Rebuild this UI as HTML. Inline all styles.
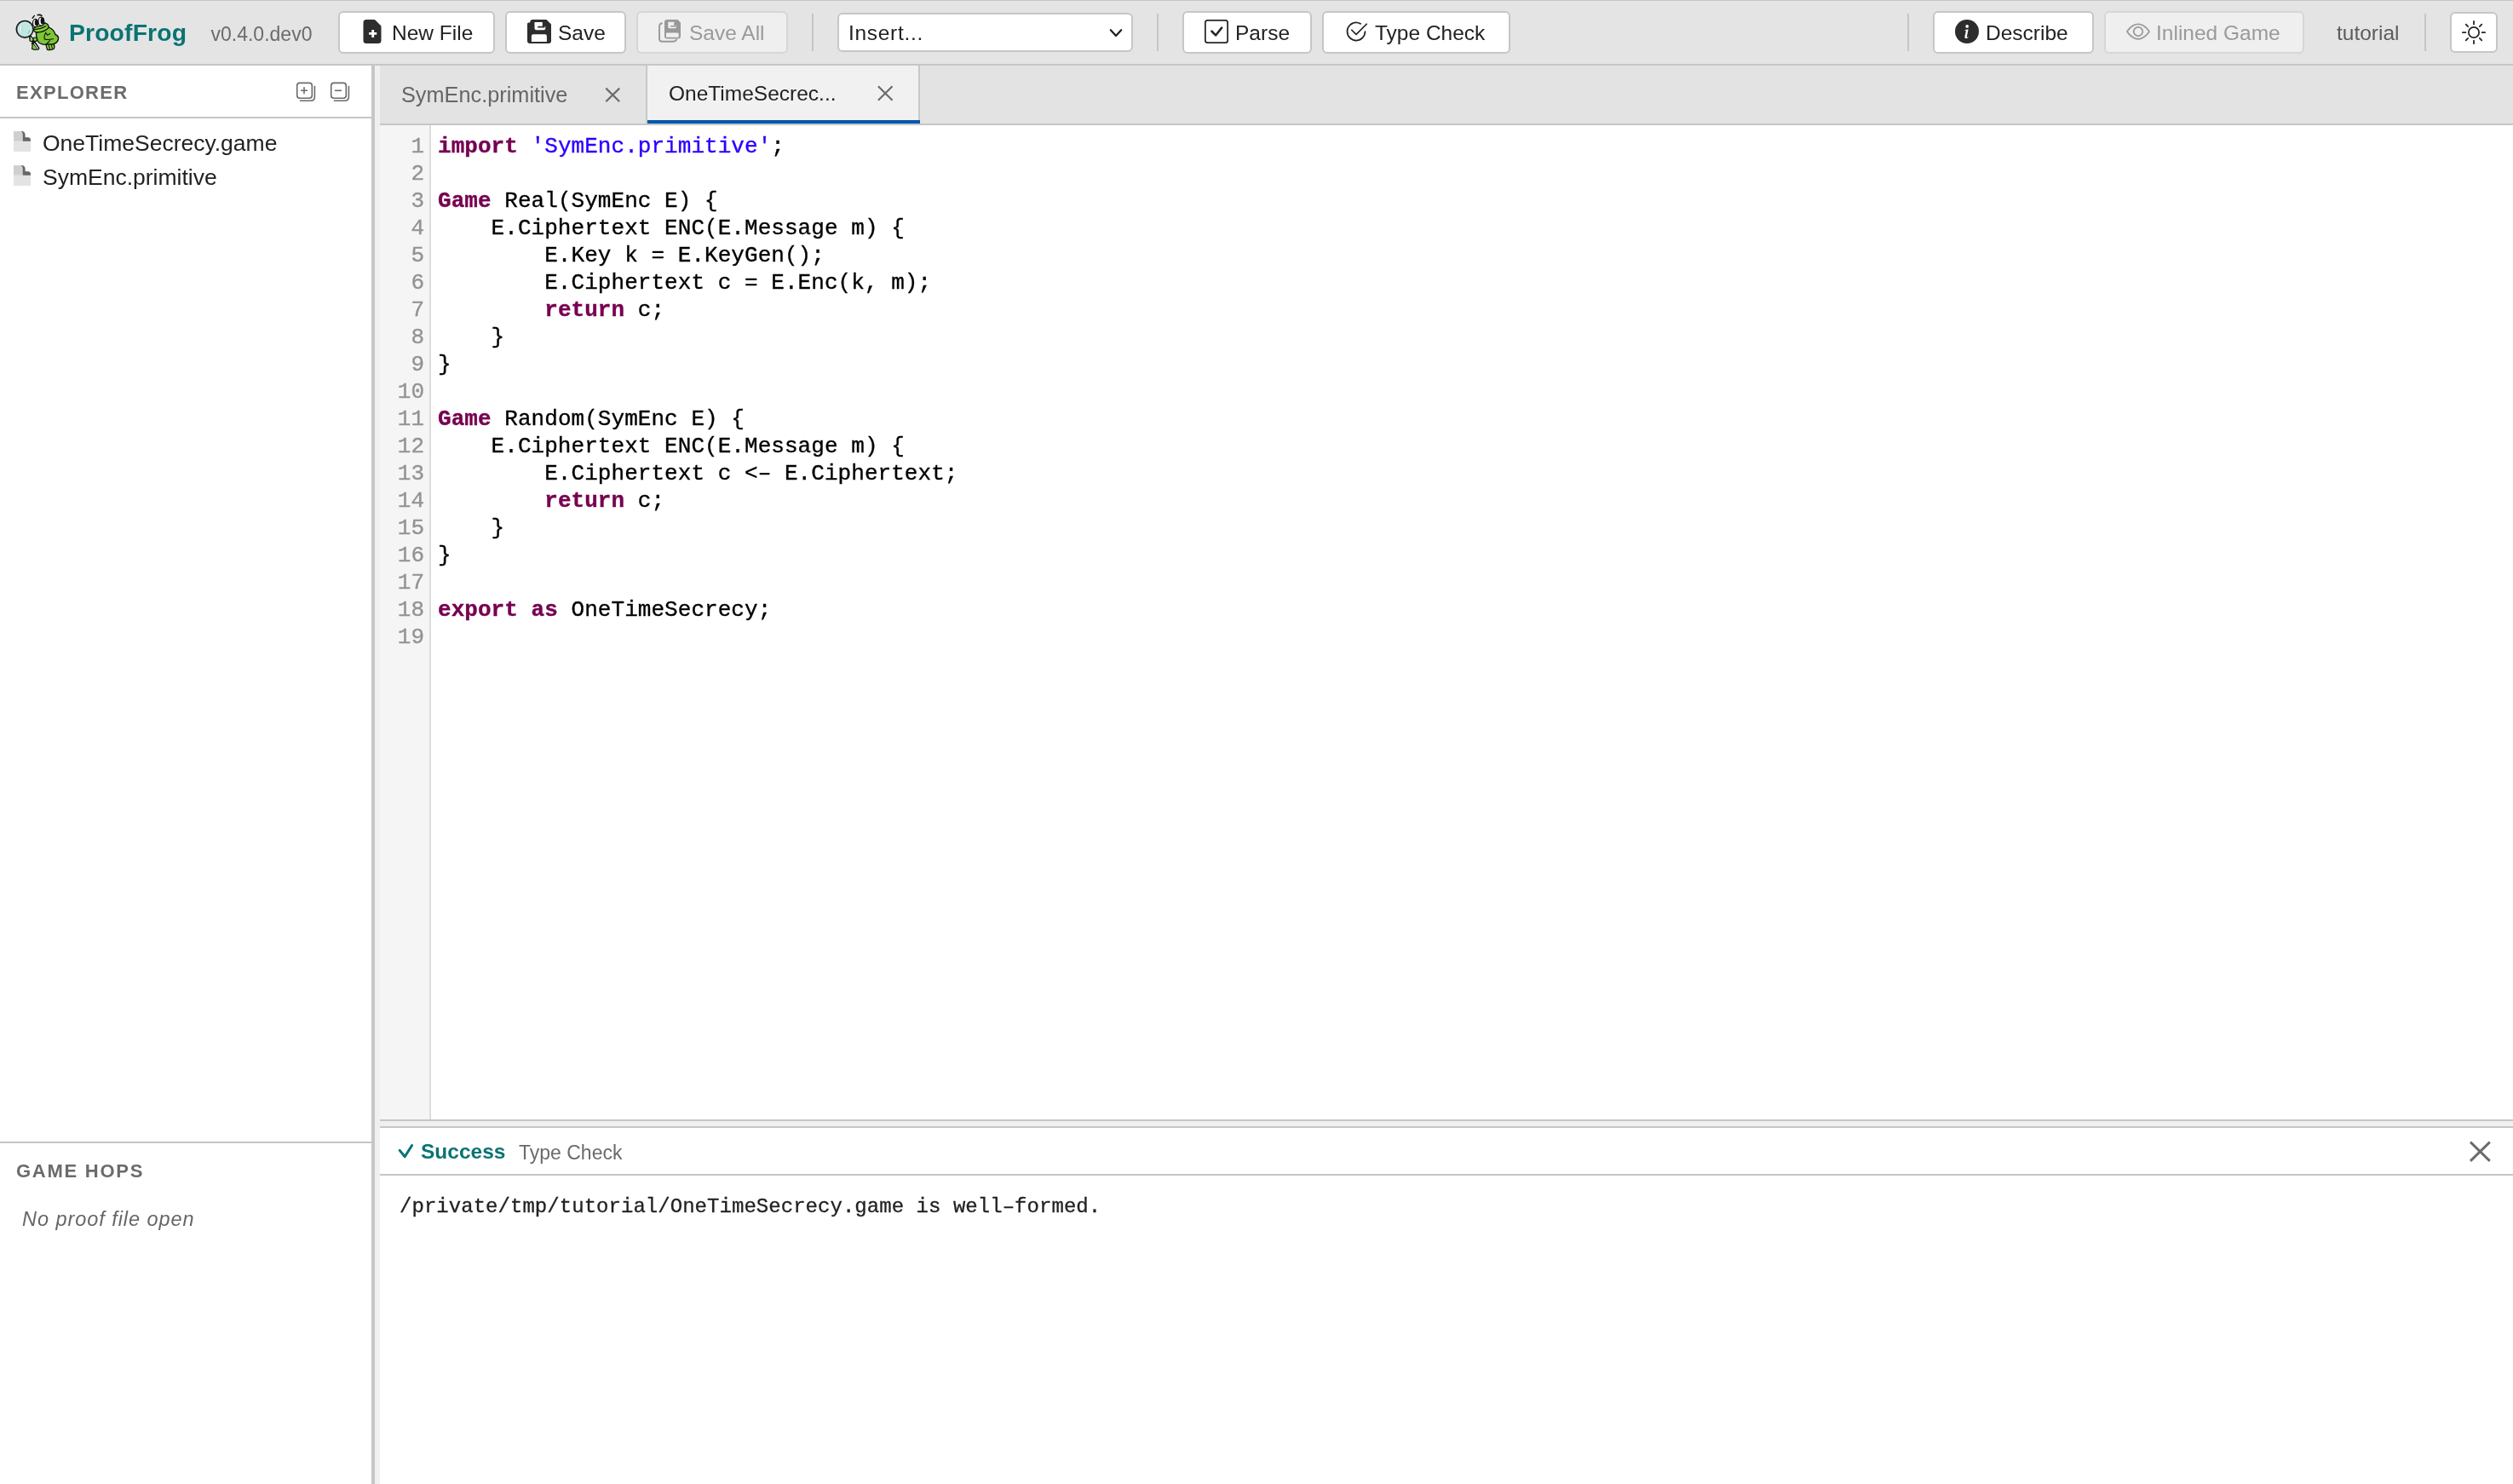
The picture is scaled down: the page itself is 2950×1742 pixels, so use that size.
<!DOCTYPE html>
<html><head><meta charset="utf-8">
<style>
*{box-sizing:border-box;margin:0;padding:0}
html,body{width:2950px;height:1742px;overflow:hidden;background:#fff;}
body{will-change:transform;font-family:"Liberation Sans",sans-serif;color:#222}
.a{position:absolute}
.t{position:absolute;white-space:pre;line-height:1}
#toolbar{left:0;top:0;width:2950px;height:77px;background:#e4e4e4;border-top:1px solid #c4c4c4;border-bottom:2px solid #c6c6c6}
.btn{position:absolute;top:13px;height:50px;background:#fff;border:2px solid #c6c6c6;border-radius:6px}
.btn.dis{background:#efefef;border-color:#d6d6d6}
.sep{position:absolute;top:16px;width:2px;height:44px;background:#c6c6c6}
.bt{position:absolute;white-space:pre;line-height:1;font-size:24.5px;color:#222}
.dis .bt{color:#999}
k{color:#770050;font-weight:700}s{color:#2a00ff;text-decoration:none}
</style></head>
<body>
<!-- TOOLBAR -->
<div id="toolbar" class="a"></div>
<svg class="a" style="left:0;top:0" width="80" height="70" viewBox="0 0 80 70">
<g stroke="#111" stroke-linejoin="round" stroke-linecap="round">
<path d="M35.5,43.3 L44.7,56.8" stroke-width="3.4"/>
<path d="M57.3,32.1 C61,33.5 64,37 65,40.5 C67.5,41.5 69,44 68.3,46.5 C67.5,49.5 65,51 63,51.5 L62,52.5 C60,52.8 57,52.5 54.5,52.3 C50,52.5 46,51 44.5,48.5 C43,45.5 42.5,41.5 42.3,38.5 C46,37.5 52,35.5 57.3,32.1 Z" fill="#7dc735" stroke-width="1.4"/>
<path d="M54,52 L63.2,51.8 C64,54 64,56.5 63,57.5 C60,58.8 57,58.8 55.5,58.2 C54.8,56 54.3,54 54,52 Z" fill="#84d236" stroke-width="1.3"/>
<path d="M57.3,53 L58.6,58.3 M60.3,52.8 L61.6,57.6" fill="none" stroke-width="1"/>
<path d="M38.9,34.3 C40,32 43,31 46,30.8 C49,30.5 51.5,29 52.5,27 C55,27.5 57,29.5 57.3,32.1 C55,35 50,37.5 44.7,37.9 C41.5,38 39.5,36.5 38.9,34.3 Z" fill="#84d236" stroke-width="1.3"/>
<path d="M39.3,34.7 C42,34.5 45,34 47.6,33.4 C50,32.7 52.5,31.5 54,30.5" fill="none" stroke-width="1.1"/>
<path d="M53.7,38.3 C52.3,40.5 51.6,43 52.1,45.7 C54,46.8 58,46.6 62.5,45.7 M53.7,38.3 L55.6,41.2 L58.8,39.6" fill="none" stroke-width="1.1"/>
<path d="M54.7,51.5 L58.6,47.6" fill="none" stroke-width="1.1"/>
<ellipse cx="41.6" cy="27" rx="3.1" ry="4.55" fill="#fff" stroke-width="1.2"/>
<ellipse cx="48.4" cy="25.2" rx="3.4" ry="5" fill="#fff" stroke-width="1.2"/>
<ellipse cx="42.7" cy="26.4" rx="1.9" ry="3.7" fill="#111" stroke="none"/>
<ellipse cx="49.7" cy="24.6" rx="2.1" ry="4" fill="#111" stroke="none"/>
<path d="M38.1,21.2 L40.4,18.4" fill="none" stroke-width="1.4"/>
<path d="M44.3,17.6 C46,17.2 47.8,17.5 48.9,18.4" fill="none" stroke-width="1.6"/>
<path d="M37.4,50.2 C39.5,51.5 42,53.5 43.8,55.3 L44.2,58 C42,58.6 39.5,58.2 37.5,57.2 C38.3,55 38.2,52.5 37.4,50.2 Z" fill="#84d236" stroke-width="1.2"/>
<circle cx="36.9" cy="46.4" r="2.1" fill="#84d236" stroke-width="1.1"/>
<circle cx="41.2" cy="46.3" r="2.3" fill="#84d236" stroke-width="1.1"/>
<path d="M40.3,51.2 L44.5,56.8" stroke="#111" stroke-width="2.6"/>
<path d="M40.3,51.2 L44.5,56.8" stroke="#d6f0f0" stroke-width="1.1"/>
<path d="M36,43.8 L37.6,46" stroke="#d6f0f0" stroke-width="1"/>
</g>
<circle cx="29.2" cy="34.3" r="10.6" fill="#111"/>
<circle cx="29.2" cy="34.3" r="9.3" fill="#6f8f8d"/>
<circle cx="29.2" cy="34.3" r="8.5" fill="#dff5f2"/>
<circle cx="29.2" cy="34.3" r="7.8" fill="#bfe8e2"/>
<path d="M25.3,30.3 C24.2,32.5 24.2,35.5 25.2,37.8" fill="none" stroke="#fff" stroke-width="1.1"/>
<path d="M26.2,30.2 C25.2,32.5 25.2,35.5 26,37.6" fill="none" stroke="#8fa9a7" stroke-width="0.5"/>
<path d="M34.8,35.5 C34.4,37 33.8,38.2 33,39.2" fill="none" stroke="#7a9896" stroke-width="0.8"/>
</svg>
<div class="t" style="left:81px;top:24px;font-size:28.3px;letter-spacing:0.15px;font-weight:700;color:#0a7373">ProofFrog</div>
<div class="t" style="left:247.5px;top:29px;font-size:23px;color:#6b6b6b">v0.4.0.dev0</div>

<div class="btn" style="left:397px;width:184px"></div>
<div class="btn" style="left:593px;width:142px"></div>
<div class="btn dis" style="left:747px;width:178px"></div>
<div class="sep" style="left:953px"></div>
<div class="btn" style="left:983px;top:15px;width:347px;height:46px"></div>
<div class="sep" style="left:1358px"></div>
<div class="btn" style="left:1388px;width:152px"></div>
<div class="btn" style="left:1552px;width:221px"></div>
<div class="sep" style="left:2239px"></div>
<div class="btn" style="left:2269px;width:189px"></div>
<div class="btn dis" style="left:2470px;width:235px"></div>
<div class="sep" style="left:2846px"></div>
<div class="btn" style="left:2876px;top:14px;width:56px;height:48px"></div>

<!-- SIDEBAR -->
<div class="a" style="left:436px;top:77px;width:4px;height:1665px;background:#c6c6c6"></div>
<div class="a" style="left:440px;top:77px;width:6px;height:1665px;background:#f0f0f0"></div>
<div class="a" style="left:0;top:137px;width:436px;height:2px;background:#c6c6c6"></div>
<div class="a" style="left:0;top:1340px;width:436px;height:2px;background:#c6c6c6"></div>

<!-- TABS -->
<div class="a" style="left:446px;top:77px;width:2504px;height:70px;background:#e3e3e3;border-bottom:2px solid #c6c6c6"></div>
<div class="a" style="left:758px;top:77px;width:322px;height:68px;background:#f1f1f1;border-left:2px solid #c8c8c8;border-right:2px solid #c8c8c8"></div>
<div class="a" style="left:760px;top:141px;width:320px;height:4px;background:#0057ae"></div>

<!-- EDITOR -->
<div class="a" style="left:446px;top:147px;width:58px;height:1167px;background:#f5f5f5"></div>
<div class="a" style="left:504px;top:147px;width:2px;height:1167px;background:#dcdcdc"></div>
<div class="a" style="left:446px;top:1314px;width:2504px;height:2px;background:#c6c6c6"></div>
<div class="a" style="left:446px;top:1316px;width:2504px;height:6px;background:#f0f0f0"></div>
<div class="a" style="left:446px;top:1322px;width:2504px;height:2px;background:#c6c6c6"></div>
<div class="a" style="left:446px;top:1378px;width:2504px;height:2px;background:#c6c6c6"></div>


<!-- toolbar text -->
<div class="bt" style="left:460px;top:27px">New File</div>
<div class="bt" style="left:655px;top:27px">Save</div>
<div class="bt" style="left:809px;top:27px;color:#9a9a9a">Save All</div>
<div class="bt" style="left:996px;top:27px;letter-spacing:0.7px">Insert...</div>
<div class="bt" style="left:1450px;top:27px">Parse</div>
<div class="bt" style="left:1614px;top:27px">Type Check</div>
<div class="bt" style="left:2331px;top:27px">Describe</div>
<div class="bt" style="left:2531px;top:27px;color:#9a9a9a">Inlined Game</div>
<div class="bt" style="left:2743px;top:27px;color:#5c5c5c">tutorial</div>

<!-- sidebar text -->
<div class="t" style="left:19px;top:98px;font-size:22px;font-weight:700;letter-spacing:1.3px;color:#6b6b6b">EXPLORER</div>
<div class="t" style="left:50px;top:155px;font-size:26.5px;color:#222">OneTimeSecrecy.game</div>
<div class="t" style="left:50px;top:195px;font-size:26.5px;color:#222">SymEnc.primitive</div>
<div class="t" style="left:19px;top:1364px;font-size:22px;font-weight:700;letter-spacing:1.75px;color:#6b6b6b">GAME HOPS</div>
<div class="t" style="left:26px;top:1420px;font-size:23.5px;letter-spacing:0.95px;font-style:italic;color:#666">No proof file open</div>

<!-- tabs text -->
<div class="t" style="left:471px;top:99px;font-size:25.3px;color:#666">SymEnc.primitive</div>
<div class="t" style="left:785px;top:98px;font-size:24.5px;color:#222">OneTimeSecrec...</div>

<!-- panel -->
<div class="t" style="left:494px;top:1340px;font-size:24.5px;font-weight:700;color:#0a7373">Success</div>
<div class="t" style="left:609px;top:1342px;font-size:23px;color:#6b6b6b">Type Check</div>
<div class="t" style="left:469px;top:1405px;font-family:'Liberation Mono',monospace;font-size:24px;letter-spacing:0.04px;color:#222;-webkit-text-stroke:0.3px #222">/private/tmp/tutorial/OneTimeSecrecy.game is well–formed.</div>
<div class="a" style="left:448px;top:156px;width:50px;font-family:'Liberation Mono',monospace;font-size:26px;line-height:32px;color:#939393;text-align:right;white-space:pre;-webkit-text-stroke:0.35px #939393">1
2
3
4
5
6
7
8
9
10
11
12
13
14
15
16
17
18
19</div>
<div class="a" id="code" style="left:514px;top:156px;letter-spacing:0.05px;font-family:'Liberation Mono',monospace;font-size:26px;line-height:32px;color:#000;white-space:pre;-webkit-text-stroke:0.35px"><k>import</k> <s>'SymEnc.primitive'</s>;

<k>Game</k> Real(SymEnc E) {
    E.Ciphertext ENC(E.Message m) {
        E.Key k = E.KeyGen();
        E.Ciphertext c = E.Enc(k, m);
        <k>return</k> c;
    }
}

<k>Game</k> Random(SymEnc E) {
    E.Ciphertext ENC(E.Message m) {
        E.Ciphertext c &lt;– E.Ciphertext;
        <k>return</k> c;
    }
}

<k>export</k> <k>as</k> OneTimeSecrecy;
</div>

<!-- ICONS -->
<svg class="a" style="left:423px;top:23px" width="28" height="28" viewBox="0 0 16 16"><path fill="#2d2d2d" d="M9.293 0H4a2 2 0 0 0-2 2v12a2 2 0 0 0 2 2h8a2 2 0 0 0 2-2V4.707A1 1 0 0 0 13.707 4L10 .293A1 1 0 0 0 9.293 0z"/><path stroke="#fff" stroke-width="1.6" d="M8.4 6.8v5.2M5.8 9.4h5.2"/></svg>
<svg class="a" style="left:619px;top:23px" width="28" height="28" viewBox="0 0 28 28"><path fill="#2d2d2d" d="M0,5 Q0,3.4 1.6,3.4 H3.2 Q3.4,0 6.2,0 H22.5 L28,5.5 V25 Q28,28 25,28 H3 Q0,28 0,25 Z"/><path fill="#fff" d="M4.9,26.1 V19.2 Q4.9,17.2 6.9,17.2 H20.9 Q22.9,17.2 22.9,19.2 V26.1 Z M8.5,3.1 H21.3 V10.2 Q21.3,12.2 19.3,12.2 H10.5 Q8.5,12.2 8.5,10.2 Z"/><path fill="#2d2d2d" d="M17.8,2 H22 V8.1 H17.8 Z M12.9,7.8 H20.5 V9.6 H12.9 Q12.1,9.6 12.1,8.7 Q12.1,7.8 12.9,7.8 Z"/></svg>
<svg class="a" style="left:772px;top:23px" width="28" height="28" viewBox="0 0 28 28"><path fill="none" stroke="#999" stroke-width="1.9" d="M5.8,4.3 Q2,4.4 2,8.5 V22.5 Q2,25.8 5.3,25.8 H18 Q21.5,25.8 22.4,23"/><path fill="#999" d="M8,3 Q8,0 11,0 H23.5 L27,3.5 V19.6 Q27,22.6 24,22.6 H11 Q8,22.6 8,19.6 Z"/><path fill="#efefef" d="M9.9,20.8 V17 Q9.9,15.6 11.3,15.6 H23.3 Q24.7,15.6 24.7,17 V20.8 Z M12.3,2.8 H21.7 V8.8 Q21.7,10.3 20.2,10.3 H13.8 Q12.3,10.3 12.3,8.8 Z"/><path fill="#999" d="M19.3,1.5 H22.5 V7.2 H19.3 Z M15.5,7 H21 V8.5 H15.5 Q14.8,8.5 14.8,7.75 Q14.8,7 15.5,7 Z"/></svg>
<svg class="a" style="left:1300px;top:31px" width="20" height="14" viewBox="0 0 20 14"><path fill="none" stroke="#222" stroke-width="2.3" stroke-linecap="round" stroke-linejoin="round" d="M3.8,4.3 L10,11 L16.2,4.3"/></svg>
<svg class="a" style="left:1414px;top:23px" width="28" height="28" viewBox="0 0 16 16"><path fill="#262626" d="M14 1a1 1 0 0 1 1 1v12a1 1 0 0 1-1 1H2a1 1 0 0 1-1-1V2a1 1 0 0 1 1-1zM2 0a2 2 0 0 0-2 2v12a2 2 0 0 0 2 2h12a2 2 0 0 0 2-2V2a2 2 0 0 0-2-2z"/><path fill="#262626" d="M10.97 4.97a.75.75 0 0 1 1.071 1.05l-3.992 4.99a.75.75 0 0 1-1.08.02L4.324 8.384a.75.75 0 1 1 1.06-1.06l2.094 2.093 3.473-4.425z"/></svg>
<svg class="a" style="left:1578px;top:23px" width="28" height="28" viewBox="0 0 16 16"><path fill="#222" d="M2.5 8a5.5 5.5 0 0 1 8.25-4.764.5.5 0 0 0 .5-.866A6.5 6.5 0 1 0 14.5 8a.5.5 0 0 0-1 0 5.5 5.5 0 1 1-11 0"/><path fill="#222" d="M15.354 3.354a.5.5 0 0 0-.708-.708L8 9.293 5.354 6.646a.5.5 0 1 0-.708.708l3 3a.5.5 0 0 0 .708 0z"/></svg>
<svg class="a" style="left:2295px;top:23px" width="28" height="28" viewBox="0 0 16 16"><circle cx="8" cy="8" r="8" fill="#2d2d2d"/><path fill="#fff" d="M8.93 6.588l-2.29.287-.082.38.45.083c.294.07.352.176.288.469l-.738 3.468c-.194.897.105 1.319.808 1.319.545 0 1.178-.252 1.465-.598l.088-.416c-.2.176-.492.246-.686.246-.275 0-.375-.193-.304-.533z"/><circle cx="8.1" cy="4.5" r="1.05" fill="#fff"/></svg>
<svg class="a" style="left:2496px;top:23px" width="28" height="28" viewBox="0 0 16 16"><path fill="#999" d="M16 8s-3-5.5-8-5.5S0 8 0 8s3 5.5 8 5.5S16 8 16 8M1.173 8a13 13 0 0 1 1.66-2.043C4.12 4.668 5.88 3.5 8 3.5s3.879 1.168 5.168 2.457A13 13 0 0 1 14.828 8q-.086.13-.195.288c-.335.48-.83 1.12-1.465 1.755C11.879 11.332 10.119 12.5 8 12.5s-3.879-1.168-5.168-2.457A13 13 0 0 1 1.172 8z"/><path fill="#999" d="M8 5.5a2.5 2.5 0 1 0 0 5 2.5 2.5 0 0 0 0-5M4.5 8a3.5 3.5 0 1 1 7 0 3.5 3.5 0 0 1-7 0"/></svg>
<svg class="a" style="left:2890px;top:24px" width="28" height="28" viewBox="0 0 16 16"><path fill="#222" d="M8 11a3 3 0 1 1 0-6 3 3 0 0 1 0 6m0 1a4 4 0 1 0 0-8 4 4 0 0 0 0 8M8 0a.5.5 0 0 1 .5.5v2a.5.5 0 0 1-1 0v-2A.5.5 0 0 1 8 0m0 13a.5.5 0 0 1 .5.5v2a.5.5 0 0 1-1 0v-2A.5.5 0 0 1 8 13m8-5a.5.5 0 0 1-.5.5h-2a.5.5 0 0 1 0-1h2a.5.5 0 0 1 .5.5M3 8a.5.5 0 0 1-.5.5h-2a.5.5 0 0 1 0-1h2A.5.5 0 0 1 3 8m10.657-5.657a.5.5 0 0 1 0 .707l-1.414 1.415a.5.5 0 1 1-.707-.708l1.414-1.414a.5.5 0 0 1 .707 0m-9.193 9.193a.5.5 0 0 1 0 .707L3.05 13.657a.5.5 0 0 1-.707-.707l1.414-1.414a.5.5 0 0 1 .707 0m9.193 2.121a.5.5 0 0 1-.707 0l-1.414-1.414a.5.5 0 0 1 .707-.707l1.414 1.414a.5.5 0 0 1 0 .707M4.464 4.465a.5.5 0 0 1-.707 0L2.343 3.05a.5.5 0 1 1 .707-.707l1.414 1.414a.5.5 0 0 1 0 .708"/></svg>

<!-- explorer icons -->
<svg class="a" style="left:344px;top:94px" width="30" height="28" viewBox="0 0 30 28"><rect x="4.7" y="3.4" width="17.6" height="17.8" rx="3.2" fill="none" stroke="#6b6b6b" stroke-width="1.6"/><path fill="none" stroke="#6b6b6b" stroke-width="1.6" d="M25.4,6.8 V19.5 Q25.4,24.3 20.6,24.3 H7.8"/><path stroke="#6b6b6b" stroke-width="1.6" d="M13,8.3 V16.3 M9,12.3 H17"/></svg>
<svg class="a" style="left:384px;top:94px" width="30" height="28" viewBox="0 0 30 28"><rect x="4.7" y="3.4" width="17.6" height="17.8" rx="3.2" fill="none" stroke="#6b6b6b" stroke-width="1.6"/><path fill="none" stroke="#6b6b6b" stroke-width="1.6" d="M25.4,6.8 V19.5 Q25.4,24.3 20.6,24.3 H7.8"/><path stroke="#6b6b6b" stroke-width="1.6" d="M9,12.3 H17"/></svg>

<!-- file icons -->
<svg class="a" style="left:16px;top:154px" width="20" height="24" viewBox="0 0 20 24"><path fill="#cfcfcf" d="M0,0 H10 Q13,0 13,3 V7 H17 Q20,7 20,10 V24 H0 Z"/><rect x="0" y="11.5" width="20" height="12.5" fill="#e3e3e3"/><path fill="#5a5a5a" d="M8.6,0 Q13.6,0 13.6,4.6 V7.2 H16.4 Q20,7.2 20,10.8 V11.8 H10.8 V4 Q10.8,1 8.6,0 Z" opacity="0.9"/></svg>
<svg class="a" style="left:16px;top:194px" width="20" height="24" viewBox="0 0 20 24"><path fill="#cfcfcf" d="M0,0 H10 Q13,0 13,3 V7 H17 Q20,7 20,10 V24 H0 Z"/><rect x="0" y="11.5" width="20" height="12.5" fill="#e3e3e3"/><path fill="#5a5a5a" d="M8.6,0 Q13.6,0 13.6,4.6 V7.2 H16.4 Q20,7.2 20,10.8 V11.8 H10.8 V4 Q10.8,1 8.6,0 Z" opacity="0.9"/></svg>

<!-- close X -->
<svg class="a" style="left:709px;top:99px" width="20" height="24" viewBox="0 0 20 24"><path stroke="#6b6b6b" stroke-width="2.2" d="M2.3,4.6 L18.2,20.2 M18.2,4.6 L2.3,20.2"/></svg>
<svg class="a" style="left:1029px;top:99px" width="20" height="22" viewBox="0 0 20 22"><path stroke="#6b6b6b" stroke-width="2.2" d="M1.9,2.3 L18.5,18.7 M18.5,2.3 L1.9,18.7"/></svg>
<svg class="a" style="left:2896px;top:1336px" width="30" height="30" viewBox="0 0 30 30"><path stroke="#6b6b6b" stroke-width="2.9" d="M4,4.6 L26.8,26.9 M26.8,4.6 L4,26.9"/></svg>

<!-- success check -->
<svg class="a" style="left:464px;top:1340px" width="26" height="24" viewBox="0 0 26 24"><path fill="none" stroke="#0a7373" stroke-width="3" stroke-linecap="round" stroke-linejoin="round" d="M5.2,10.4 L11.2,17.8 L19.6,4.5"/></svg>
<script>(function(){var w=window.innerWidth;if(w&&Math.abs(w-2950)>2){document.documentElement.style.zoom=(w/2950);}})();</script>
</body></html>
